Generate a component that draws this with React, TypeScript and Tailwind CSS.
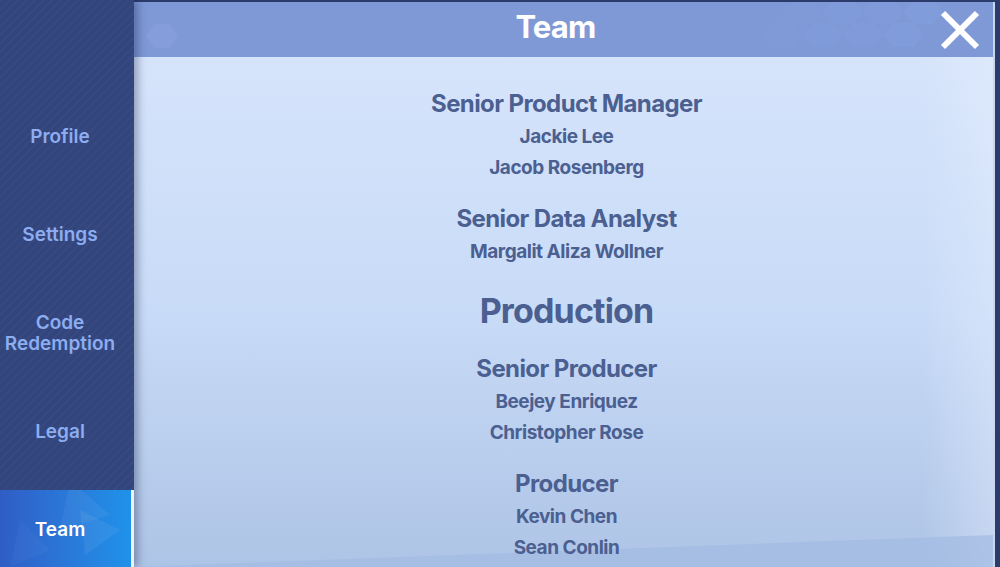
import React from 'react';

const navItems = ['Profile', 'Settings', 'Code Redemption', 'Legal'];

const credits: { type: 'dept' | 'role' | 'name'; text: string }[] = [
  { type: 'role', text: 'Senior Product Manager' },
  { type: 'name', text: 'Jackie Lee' },
  { type: 'name', text: 'Jacob Rosenberg' },
  { type: 'role', text: 'Senior Data Analyst' },
  { type: 'name', text: 'Margalit Aliza Wollner' },
  { type: 'dept', text: 'Production' },
  { type: 'role', text: 'Senior Producer' },
  { type: 'name', text: 'Beejey Enriquez' },
  { type: 'name', text: 'Christopher Rose' },
  { type: 'role', text: 'Producer' },
  { type: 'name', text: 'Kevin Chen' },
  { type: 'name', text: 'Sean Conlin' },
];

const App: React.FC = () => {
  return (
    <div className="flex w-[1000px] h-[567px] overflow-hidden bg-[#2c3b6c] font-['Inter','Liberation_Sans',sans-serif]">
      {/* Sidebar */}
      <aside className="relative z-10 flex flex-col w-[134px] shrink-0 pt-[87px] bg-[#33457d] bg-[repeating-linear-gradient(135deg,rgba(255,255,255,0.025)_0px,rgba(255,255,255,0.025)_2px,transparent_2px,transparent_6px)] shadow-[4px_0_8px_rgba(20,30,70,0.35)]">
        {navItems.map((item) => (
          <div
            key={item}
            className="flex items-center justify-center h-[98.5px] pr-[14px] text-center text-[19px] leading-[21px] font-semibold text-[#8cadf0]"
          >
            {item === 'Code Redemption' ? (
              <div className="flex flex-col">
                <span>Code</span>
                <span>Redemption</span>
              </div>
            ) : (
              item
            )}
          </div>
        ))}
        <div className="relative flex items-center justify-center mt-[9px] h-[77px] pt-[3px] pr-[11px] bg-gradient-to-r from-[#2f5dc6] to-[#1e92ea] border-r-[3px] border-[#eaf4ff] overflow-hidden">
          <svg className="absolute inset-0" width="131" height="77" viewBox="0 0 131 77">
            <polygon points="70,-10 110,25 60,40" fill="rgba(255,255,255,0.05)" />
            <polygon points="80,20 120,40 85,65" fill="rgba(255,255,255,0.06)" />
            <polygon points="20,30 50,60 10,77" fill="rgba(255,255,255,0.03)" />
          </svg>
          <span className="relative text-[19px] font-semibold text-white">Team</span>
        </div>
      </aside>

      {/* Main panel */}
      <main className="relative flex flex-col flex-1 pt-[2px] pr-[5px] bg-[#2c3b6c]">
        <div className="flex flex-col flex-1 border-r-[2px] border-[#c9d6ee]">
          <header className="relative flex items-center justify-center h-[55px] shrink-0 pb-[5px] pr-[16px] bg-[#7f99d7] overflow-hidden">
            <svg className="absolute right-[50px] top-0" width="200" height="55" viewBox="0 0 200 55">
              {[
                [40, 10], [80, 10], [120, 10], [160, 10],
                [20, 33], [60, 33], [100, 33], [140, 33],
              ].map(([x, y], i) => (
                <polygon
                  key={i}
                  points={`${x + 10},${y - 12} ${x + 30},${y - 12} ${x + 40},${y} ${x + 30},${y + 12} ${x + 10},${y + 12} ${x},${y}`}
                  fill={`rgba(140,170,235,${0.08 + (i % 4) * 0.04})`}
                />
              ))}
            </svg>
            <svg className="absolute left-[10px] top-[14px]" width="60" height="40" viewBox="0 0 60 40">
              <polygon points="10,8 26,8 34,20 26,32 10,32 2,20" fill="rgba(160,185,240,0.18)" />
            </svg>
            <h1 className="relative text-[31px] font-bold text-white tracking-tight">Team</h1>
            <button className="absolute right-[11px] top-[6px] w-[44px] h-[44px] flex items-center justify-center">
              <svg width="42" height="42" viewBox="0 0 42 42">
                <path d="M4 4 L38 38 M38 4 L4 38" stroke="white" strokeWidth="6" strokeLinecap="butt" />
              </svg>
            </button>
          </header>

          <section className="relative flex-1 overflow-hidden bg-gradient-to-b from-[#d6e4fb] via-[#c8dbf7] to-[#aec4e6]">
            <div className="absolute inset-y-0 right-0 w-[70px] bg-gradient-to-r from-transparent to-[rgba(235,242,255,0.35)]" />
            <div className="absolute bottom-0 left-0 right-0 h-[40px] bg-[#a3bbe2] [clip-path:polygon(0_100%,100%_20%,100%_100%)] opacity-70" />
            <div className="relative flex flex-col items-center pt-[29px] pl-[6px] text-[#4b5f91]">
              {credits.map((c, i) => {
                if (c.type === 'dept')
                  return (
                    <div key={i} className="mt-[19px] h-[48px] flex items-center text-[34px] font-bold tracking-tight">
                      {c.text}
                    </div>
                  );
                if (c.type === 'role')
                  return (
                    <div
                      key={i}
                      className={`${i === 0 ? '' : 'mt-[16.5px]'} h-[36px] flex items-center text-[24px] font-bold tracking-tight`}
                    >
                      {c.text}
                    </div>
                  );
                return (
                  <div key={i} className="h-[31px] flex items-center text-[19px] font-bold tracking-tight">
                    {c.text}
                  </div>
                );
              })}
            </div>
          </section>
        </div>
      </main>
    </div>
  );
};

export default App;
